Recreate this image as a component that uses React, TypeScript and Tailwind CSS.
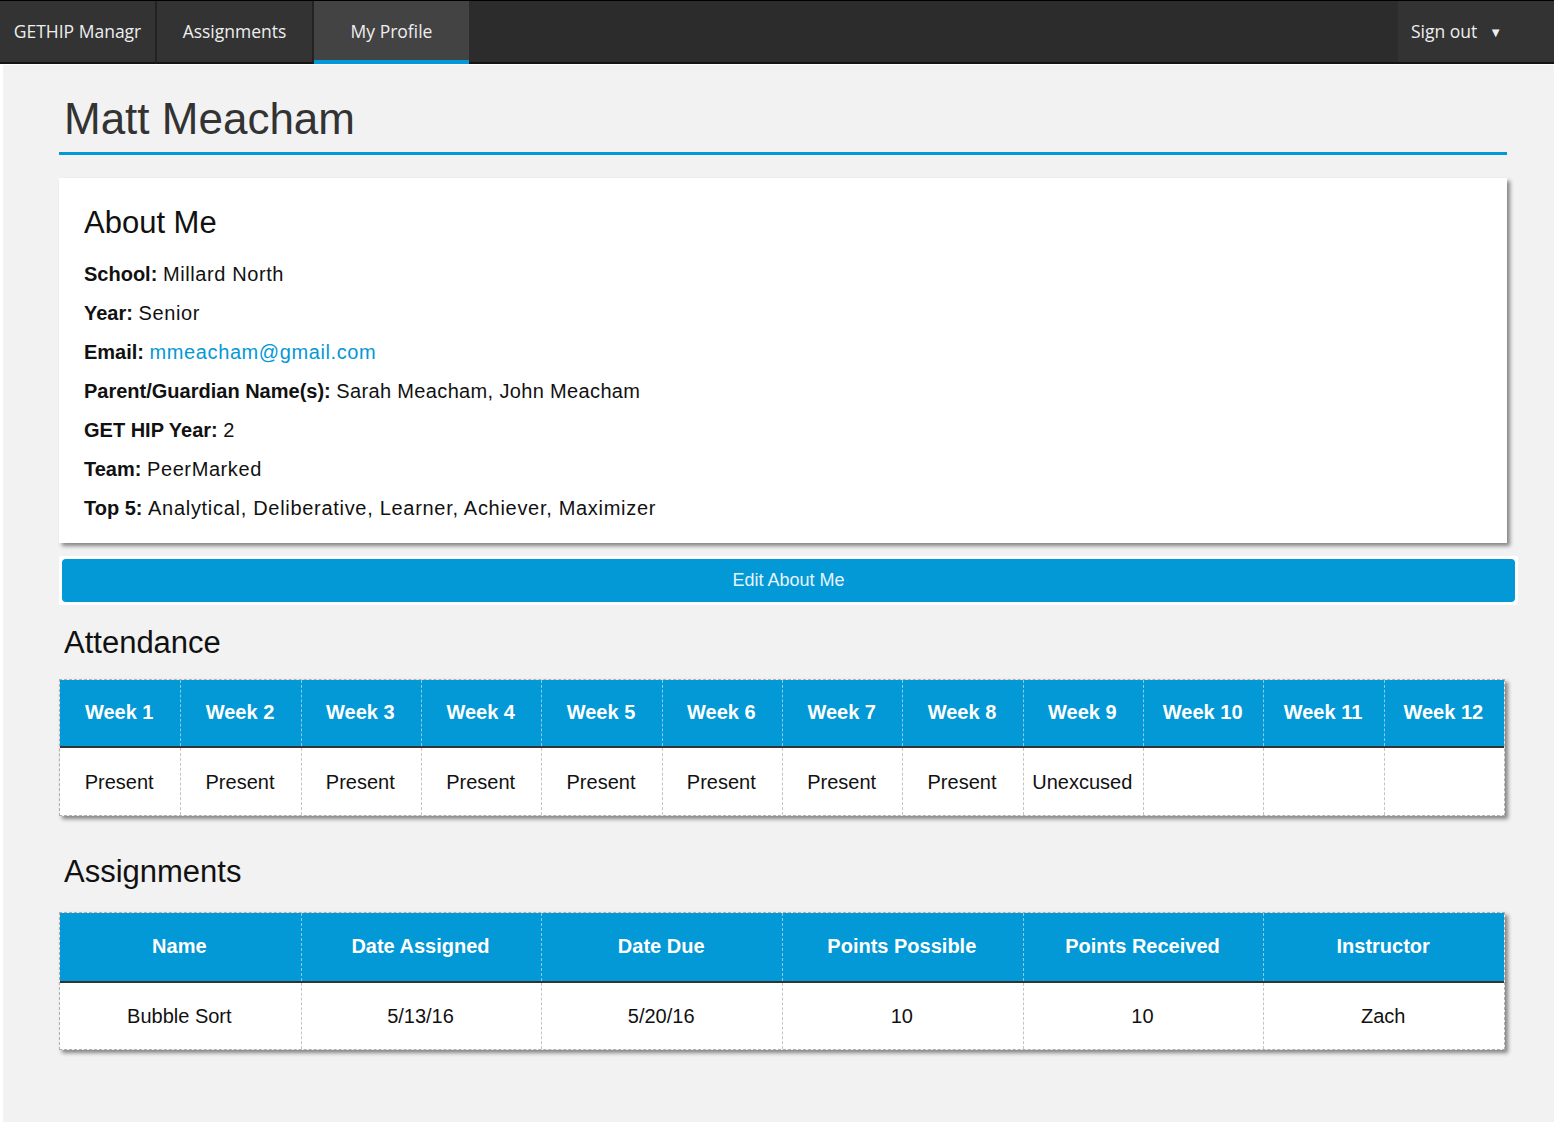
import React from "react";

const weeks = Array.from({ length: 12 }, (_, i) => `Week ${i + 1}`);
const attendance = ["Present", "Present", "Present", "Present", "Present", "Present", "Present", "Present", "Unexcused", "", "", ""];
const assignHeads = ["Name", "Date Assigned", "Date Due", "Points Possible", "Points Received", "Instructor"];
const assignRow = ["Bubble Sort", "5/13/16", "5/20/16", "10", "10", "Zach"];

function NavItem({ label, width, active }: { label: string; width: string; active?: boolean }) {
  return (
    <div
      className={
        active
          ? "flex items-center justify-center bg-[#434343] border-b-4 border-[#0398d6] text-[#eeeeee] " + width
          : "flex items-center justify-center bg-[#333333] border-b-2 border-[#141414] border-r-2 border-r-[#222222] text-[#eeeeee] " + width
      }
    >
      <span className={active ? "pt-[2px]" : ""}>{label}</span>
    </div>
  );
}

export default function App() {
  return (
    <div className="bg-white w-[1554px] h-[1125px] overflow-hidden font-['Liberation_Sans',Arial,sans-serif]">
      {/* Navbar */}
      <div className="flex h-[64px] bg-[#2c2c2c] border-t border-black font-['Open_Sans','Noto_Sans',sans-serif] text-[17.5px]">
        <NavItem label="GETHIP Managr" width="w-[157px]" />
        <NavItem label="Assignments" width="w-[157px]" />
        <NavItem label="My Profile" width="w-[155px]" active />
        <div className="flex-1 border-b-2 border-[#141414]" />
        <div className="w-[156px] bg-[#333333] border-b-2 border-[#141414] flex items-center pl-[13px] text-[#eeeeee]">
          <span>Sign out</span>
          <span className="ml-[12px] text-[13px] mt-[2px]">▼</span>
        </div>
      </div>

      {/* Main */}
      <div className="ml-[3px] mt-px h-[1057px] bg-[#f2f2f2] pl-[56px]">
        <div className="w-[1448px]">
          <h1 className="text-[44px] leading-[48px] text-[#333333] pl-[5px] pt-[30px] pb-[9px] border-b-[3px] border-[#0398d6]">
            Matt Meacham
          </h1>

          {/* About card */}
          <div className="mt-[23px] bg-white px-[25px] pt-[27px] pb-[23px] shadow-[3px_3px_4px_rgba(0,0,0,0.45)]">
            <h2 className="text-[31px] leading-[36px] text-[#111111]">About Me</h2>
            <div className="mt-[21px] flex flex-col gap-[15px] text-[20px] leading-[24px] text-[#111111]">
              <div>
                <b>School:</b> <span className="tracking-[0.6px]">Millard North</span>
              </div>
              <div>
                <b>Year:</b> <span className="tracking-[0.6px]">Senior</span>
              </div>
              <div>
                <b>Email:</b> <span className="tracking-[0.6px] text-[#0398d6]">mmeacham@gmail.com</span>
              </div>
              <div>
                <b>Parent/Guardian Name(s):</b> <span className="tracking-[0.35px]">Sarah Meacham, John Meacham</span>
              </div>
              <div>
                <b>GET HIP Year:</b> <span className="tracking-[0.6px]">2</span>
              </div>
              <div>
                <b>Team:</b> <span className="tracking-[0.6px]">PeerMarked</span>
              </div>
              <div>
                <b>Top 5:</b> <span className="tracking-[0.7px]">Analytical, Deliberative, Learner, Achiever, Maximizer</span>
              </div>
            </div>
          </div>

          {/* Edit button */}
          <div className="mt-[13px] w-[1459px] bg-white p-[3px]">
            <div className="h-[43px] rounded-[4px] bg-[#0398d6] flex items-center justify-center text-[18px] text-[#e6f4fb]">
              Edit About Me
            </div>
          </div>

          <h2 className="mt-[20px] pl-[5px] text-[31px] leading-[36px] text-[#111111]">Attendance</h2>

          {/* Attendance table */}
          <div className="mt-[18px] w-[1446px] border border-dashed border-[#b0b0b0] shadow-[3px_3px_4px_rgba(0,0,0,0.45)]">
            <div className="grid grid-cols-12 h-[68px] bg-[#0398d6] border-b-2 border-solid border-b-[#333333]">
              {weeks.map((w, i) => (
                <div
                  key={w}
                  className={
                    "flex items-center justify-center text-white font-bold text-[20px] pb-[2px] pr-[2px] " +
                    (i > 0 ? "border-l border-dashed border-[#8cc9e8]" : "")
                  }
                >
                  {w}
                </div>
              ))}
            </div>
            <div className="grid grid-cols-12 h-[67px] bg-white">
              {attendance.map((a, i) => (
                <div
                  key={i}
                  className={
                    "flex items-center justify-center text-[#111111] text-[20px] pr-[2px] " +
                    (i > 0 ? "border-l border-dashed border-[#c4c4c4]" : "")
                  }
                >
                  {a}
                </div>
              ))}
            </div>
          </div>

          <h2 className="mt-[38px] pl-[5px] text-[31px] leading-[36px] text-[#111111]">Assignments</h2>

          {/* Assignments table */}
          <div className="mt-[22px] w-[1446px] border border-dashed border-[#b0b0b0] shadow-[3px_3px_4px_rgba(0,0,0,0.45)]">
            <div className="grid grid-cols-6 h-[70px] bg-[#0398d6] border-b-2 border-solid border-b-[#333333]">
              {assignHeads.map((h, i) => (
                <div
                  key={h}
                  className={
                    "flex items-center justify-center text-white font-bold text-[20px] pb-[2px] pr-[2px] " +
                    (i > 0 ? "border-l border-dashed border-[#8cc9e8]" : "")
                  }
                >
                  {h}
                </div>
              ))}
            </div>
            <div className="grid grid-cols-6 h-[66px] bg-white">
              {assignRow.map((a, i) => (
                <div
                  key={i}
                  className={
                    "flex items-center justify-center text-[#111111] text-[20px] pr-[2px] " +
                    (i > 0 ? "border-l border-dashed border-[#c4c4c4]" : "")
                  }
                >
                  {a}
                </div>
              ))}
            </div>
          </div>
        </div>
      </div>
    </div>
  );
}
